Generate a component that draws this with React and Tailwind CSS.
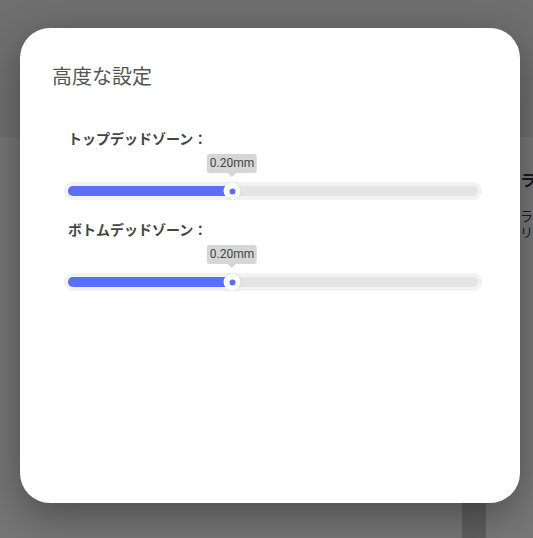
import React from "react";

const jp = { fontFamily: '"Noto Sans CJK JP", "Noto Sans", sans-serif' };

function DeadZoneSlider({ label, value, percent }) {
  return (
    <div className="flex flex-col">
      <div className="pl-4 text-[14px] leading-5 font-bold text-[#444]">{label}</div>
      <div className="relative mt-[6px] h-[46px]">
        <div className="absolute top-0 left-0 right-0 flex h-[24px] ml-[12px] mr-[6px] px-1">
          <div className="relative flex-1">
            <div
              className="absolute top-0 flex -translate-x-1/2 flex-col items-center"
              style={{ left: `${percent}%` }}
            >
              <div
                className="rounded-[3px] bg-[#d6d6d6] px-[3px] py-[2px] text-[12px] leading-[15px] text-[#444]"
                style={{ fontFamily: "Roboto, sans-serif" }}
              >
                {value}
              </div>
              <div className="h-0 w-0 border-x-[4px] border-t-[4px] border-x-transparent border-t-[#d6d6d6]" />
            </div>
          </div>
        </div>
        <div className="absolute bottom-0 left-0 right-0 ml-[12px] mr-[6px] rounded-full bg-[#f2f2f2] p-1">
          <div className="relative h-[10px] rounded-full bg-[#e4e4e4]">
            <div
              className="absolute left-0 top-0 h-full rounded-full bg-[#596ffa]"
              style={{ width: `${percent}%` }}
            />
            <div
              className="absolute top-1/2 flex h-[17px] w-[17px] -translate-x-1/2 -translate-y-1/2 items-center justify-center rounded-full bg-white shadow-[0_0_2px_rgba(0,0,0,0.15)]"
              style={{ left: `${percent}%` }}
            >
              <div className="h-[6px] w-[6px] rounded-full bg-[#596ffa]" />
            </div>
          </div>
        </div>
      </div>
    </div>
  );
}

export default function App() {
  return (
    <div className="relative h-[538px] w-[533px] overflow-hidden" style={jp}>
      {/* page behind the dialog */}
      <div className="flex h-full flex-col">
        <div className="h-[137px] shrink-0 bg-[#dedede]" />
        <div className="flex flex-1">
          <div className="w-[462px] shrink-0 bg-[#eaeaea]" />
          <div className="w-[24px] shrink-0 bg-[#bdbdbd]" />
          <div className="min-w-0 flex-1 overflow-hidden bg-[#eeeeee] pl-[34px] pt-[30px] text-[#333]">
            <div className="whitespace-nowrap text-[16px] font-bold leading-6">ラベル</div>
            <div className="mt-[17px] whitespace-nowrap text-[13px] leading-4">ライン</div>
            <div className="whitespace-nowrap text-[13px] leading-4 text-[#1f3a8a]">リンク</div>
          </div>
        </div>
      </div>

      <div className="absolute inset-0 bg-black/50" />

      <div className="absolute left-[20px] top-[28px] h-[475px] w-[500px] rounded-[30px] bg-white px-8 pt-[34px] shadow-[0_12px_40px_rgba(0,0,0,0.35)]">
        <h2 className="text-[20px] leading-7 text-[#555]">高度な設定</h2>
        <div className="mt-[38px] flex flex-col gap-[19px]">
          <DeadZoneSlider label="トップデッドゾーン：" value="0.20mm" percent={40} />
          <DeadZoneSlider label="ボトムデッドゾーン：" value="0.20mm" percent={40} />
        </div>
      </div>
    </div>
  );
}
